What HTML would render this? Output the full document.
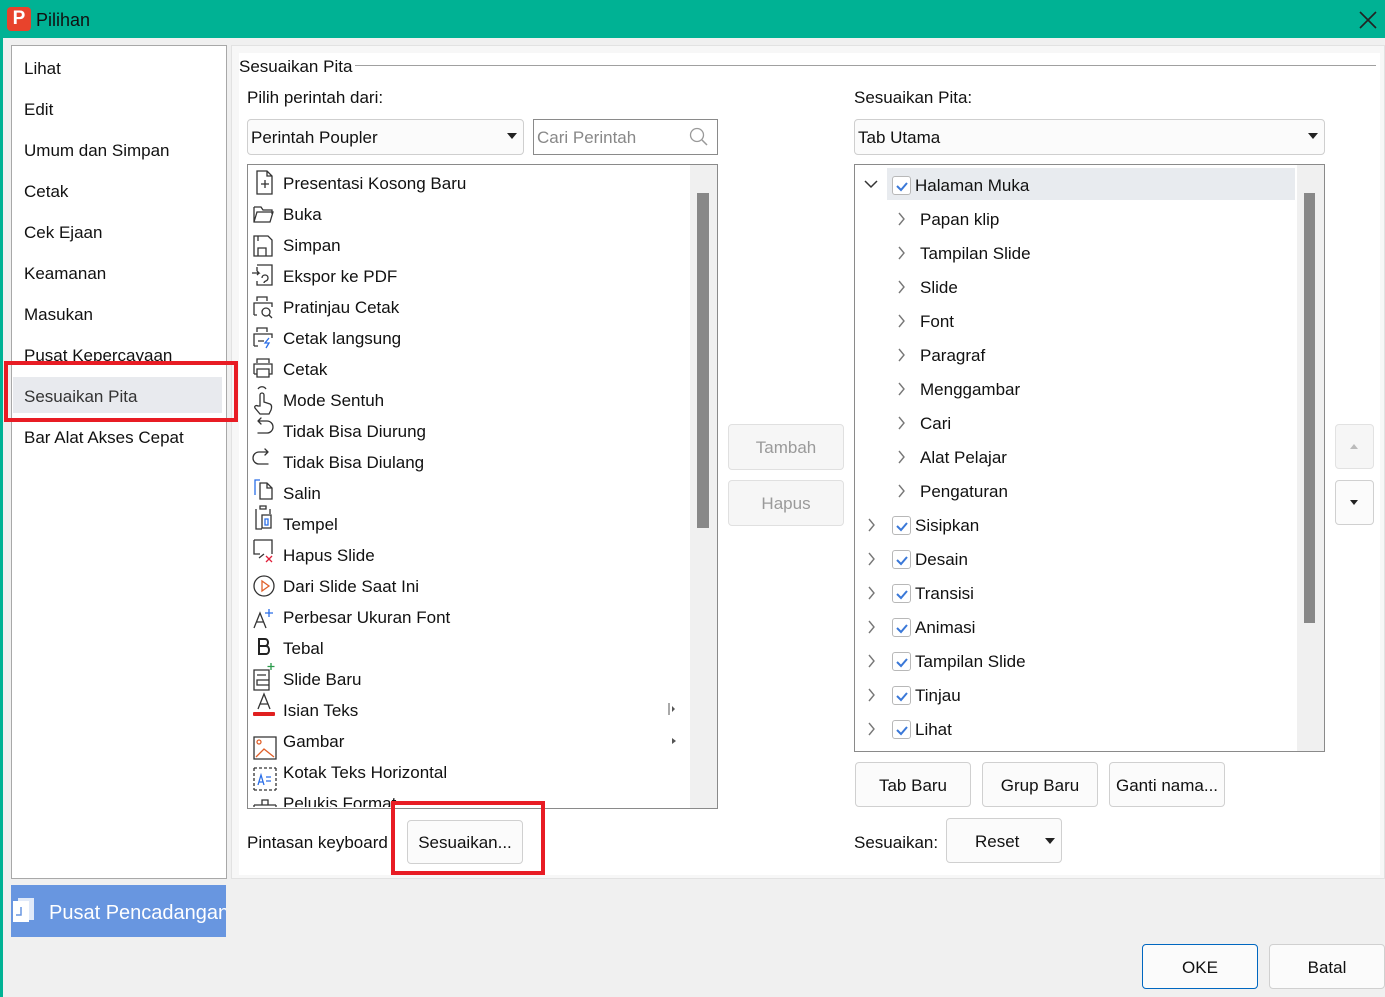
<!DOCTYPE html>
<html><head><meta charset="utf-8">
<style>
*{margin:0;padding:0;box-sizing:border-box}
body{width:1385px;height:997px;overflow:hidden;background:#f0f0f0;font-family:"Liberation Sans",sans-serif;font-size:17px;color:#111;position:relative}
.a{position:absolute}
.t{position:absolute;line-height:20px;white-space:nowrap;margin-top:1px}
.btn{position:absolute;background:#fbfbfb;border:1px solid #d0d0d0;border-radius:4px;text-align:center;font-size:17px;padding-top:1px}
.cb{position:absolute;width:19px;height:19px;border:1px solid #b8b8b8;border-radius:3px;background:#fff}
</style></head><body>
<div class="a" style="left:0;top:0;width:1385px;height:38px;background:#00b294"></div>
<div class="a" style="left:0;top:38px;width:3px;height:959px;background:#00b294"></div>
<div class="a" style="left:7px;top:7px;width:24px;height:24px;background:#e8432c;border-radius:4px;color:#fff;font-weight:bold;font-size:19px;text-align:center;line-height:23px">P</div>
<div class="t" style="left:36px;top:9px;font-size:18px;color:#111">Pilihan</div>
<svg class="a" style="left:1359px;top:11px" width="18" height="18"><path d="M1 1L17 17M17 1L1 17" stroke="#222" stroke-width="1.6"/></svg>

<div class="a" style="left:11px;top:45px;width:216px;height:834px;background:#fff;border:1px solid #a8a8a8"></div>
<div class="a" style="left:13px;top:377px;width:209px;height:36px;background:#e8eaee"></div>
<div class="t" style="left:24px;top:58px">Lihat</div>
<div class="t" style="left:24px;top:99px">Edit</div>
<div class="t" style="left:24px;top:140px">Umum dan Simpan</div>
<div class="t" style="left:24px;top:181px">Cetak</div>
<div class="t" style="left:24px;top:222px">Cek Ejaan</div>
<div class="t" style="left:24px;top:263px">Keamanan</div>
<div class="t" style="left:24px;top:304px">Masukan</div>
<div class="t" style="left:24px;top:345px">Pusat Kepercayaan</div>
<div class="t" style="left:24px;top:386px;color:#333">Sesuaikan Pita</div>
<div class="t" style="left:24px;top:427px">Bar Alat Akses Cepat</div>

<div class="a" style="left:11px;top:885px;width:215px;height:52px;background:#6896e0"></div>
<svg class="a" style="left:12px;top:897px" width="24" height="26"><rect x="6" y="1" width="16" height="22" fill="#fff" opacity=".8"/><rect x="1" y="4" width="16" height="21" fill="#fff"/><path d="M9 10v8h-5" stroke="#6896e0" stroke-width="1.5" fill="none"/></svg>
<div class="t" style="left:49px;top:902px;font-size:20px;color:#fff;width:177px;overflow:hidden">Pusat Pencadangan</div>

<div class="a" style="left:231px;top:45px;width:1154px;height:834px;background:#f7f7f7;border:1px solid #e2e2e2"></div>
<div class="a" style="left:239px;top:53px;width:1141px;height:822px;background:#fff"></div>
<div class="a" style="left:4px;top:361px;width:234px;height:61px;border:4px solid #e81c24;z-index:5"></div>
<div class="t" style="left:239px;top:56px">Sesuaikan Pita</div>
<div class="a" style="left:355px;top:65px;width:1021px;height:1px;background:#a0a0a0"></div>
<div class="t" style="left:247px;top:87px">Pilih perintah dari:</div>
<div class="a" style="left:247px;top:119px;width:277px;height:36px;border:1px solid #cfcfcf;border-radius:4px;background:#fbfbfb"></div>
<div class="t" style="left:251px;top:127px">Perintah Poupler</div>
<svg class="a" style="left:507px;top:133px" width="10" height="6"><path d="M0 0h10L5 6z" fill="#222"/></svg>
<div class="a" style="left:533px;top:119px;width:185px;height:36px;border:1px solid #8a8a8a;background:#fff"></div>
<div class="t" style="left:537px;top:127px;color:#888">Cari Perintah</div>
<svg class="a" style="left:689px;top:127px" width="20" height="20"><circle cx="8" cy="8" r="6.5" stroke="#999" fill="none" stroke-width="1.3"/><path d="M13 13l5 5" stroke="#999" stroke-width="1.5"/></svg>

<div class="a" style="left:247px;top:164px;width:471px;height:645px;border:1px solid #8a8a8a;background:#fff;overflow:hidden">
 <div class="a" style="left:442px;top:0;width:27px;height:645px;background:#f0f0f0"></div>
 <div class="a" style="left:449px;top:28px;width:12px;height:335px;background:#888"></div>
 <svg class="a" style="left:420px;top:538px" width="8" height="12"><path d="M1 0v12" stroke="#555"/><path d="M4 3l3 3-3 3z" fill="#555"/></svg>
 <svg class="a" style="left:424px;top:572px" width="6" height="8"><path d="M0 1l4 3-4 3z" fill="#555"/></svg>
</div>
<div class="a" style="left:248px;top:165px;width:440px;height:642px;overflow:hidden">
<svg width="440" height="660" style="position:absolute;left:0;top:0" fill="none" stroke="#333" stroke-width="1.3">
 <path d="M9 7h10l5 5v18H9z M19 7v5h5 M13 20h8 M17 16v8" transform="translate(0,-1)"/>
 <path d="M6 42h7l2 3h9v4 M6 42v15h16l3-10H9l-3 10"/>
 <path d="M6 71h14l4 4v16H6z M10 91v-8h8v8 M10 71v5"/>
 <path d="M9 100h15v20H9v-4 M9 106v-4 M4 108h7l-2-2m2 2l-2 2 M14 113c0-4 6-4 6 0s-4 2-4 5"/>
 <path d="M9 136v-4h10v4 M6 150v-12h18v4 M6 150h3" /><circle cx="18" cy="147" r="4"/><path d="M21 150l3 3"/>
 <path d="M9 167v-4h10v4 M6 181v-12h18v4 M6 181h4 M10 176h6"/><path d="M21 173l-4 5h4l-3 5" stroke="#2a6ee8"/>
 <path d="M9 198v-4h12v4 M6 209v-10h18v10h-3 M9 209h-3 M9 204h12v8H9z"/>
 <path d="M12 241v-11a2 2 0 014 0v7l6 2c2 1 2 3 1 6l-2 4H12l-5-6c-1-2 1-3 3-2z M10 224c2-3 6-3 8 0"/>
 <path d="M10 256h9a6 6 0 010 12h-9 M10 256l3-3 M10 256l3 3" stroke-linecap="round"/>
 <path d="M20 288h-9a6 6 0 000 12h9 M20 288l-3-3 M20 288l-3 3" stroke-linecap="round" transform="translate(0,-1)"/>
 <path d="M7 330v-15h5" stroke="#2a6ee8"/><path d="M12 334v-16h7l5 5v11z M19 318v5h5"/>
 <path d="M8 344v20h6 M22 344v5 M12 344h6v-3h-6z M14 350h9v13h-9z" /><path d="M17 354h3v6h-3z" stroke="#2a6ee8"/>
 <path d="M6 375h18v14 M6 375v14h6 M11 393l5-4" /><path d="M18 391l6 6M24 391l-6 6" stroke="#e0203a"/>
 <circle cx="16" cy="421" r="10"/><path d="M14 416v10l7-5z" stroke="#e0602a"/>
 <path d="M6 463l6-15 6 15 M8 457h8"/><path d="M21 444v8M17 448h8" stroke="#2a6ee8"/>
 <path d="M11 474h6c4 0 4 7 0 7h-6zm0 7h7c4 0 4 8 0 8h-7z" stroke="#222" stroke-width="2"/>
 <path d="M6 505h15v20H6z M9 510h9 M9 515h12v5H9z"/><path d="M23 498v7M19.5 501.5h7" stroke="#2a9a4a"/>
 <path d="M10 544l6-15 6 15 M12 539h8"/><rect x="5" y="547" width="22" height="4" fill="#e02020" stroke="none" rx="1"/>
 <path d="M6 572h22v22H6z"/><circle cx="11" cy="577" r="2" stroke="#e0602a"/><path d="M8 592l8-8 10 8" stroke="#e0602a"/>
 <path d="M6 603v22 M28 603v22 M6 603h22 M6 625h22" stroke-dasharray="3 2"/><path d="M10 620l3-10 3 10 M11 617h4 M18 612h5 M18 616h5" stroke="#2a6ee8"/>
 <path d="M6 640h22 M6 640v4 M28 640v4 M14 640v-5h6v5"/><path d="M6 644h22" stroke="#e0602a"/>
</svg>
<div class="t" style="left:35px;top:8px">Presentasi Kosong Baru</div>
<div class="t" style="left:35px;top:39px">Buka</div>
<div class="t" style="left:35px;top:70px">Simpan</div>
<div class="t" style="left:35px;top:101px">Ekspor ke PDF</div>
<div class="t" style="left:35px;top:132px">Pratinjau Cetak</div>
<div class="t" style="left:35px;top:163px">Cetak langsung</div>
<div class="t" style="left:35px;top:194px">Cetak</div>
<div class="t" style="left:35px;top:225px">Mode Sentuh</div>
<div class="t" style="left:35px;top:256px">Tidak Bisa Diurung</div>
<div class="t" style="left:35px;top:287px">Tidak Bisa Diulang</div>
<div class="t" style="left:35px;top:318px">Salin</div>
<div class="t" style="left:35px;top:349px">Tempel</div>
<div class="t" style="left:35px;top:380px">Hapus Slide</div>
<div class="t" style="left:35px;top:411px">Dari Slide Saat Ini</div>
<div class="t" style="left:35px;top:442px">Perbesar Ukuran Font</div>
<div class="t" style="left:35px;top:473px">Tebal</div>
<div class="t" style="left:35px;top:504px">Slide Baru</div>
<div class="t" style="left:35px;top:535px">Isian Teks</div>
<div class="t" style="left:35px;top:566px">Gambar</div>
<div class="t" style="left:35px;top:597px">Kotak Teks Horizontal</div>
<div class="t" style="left:35px;top:628px">Pelukis  Format</div>
</div>

<div class="btn" style="left:728px;top:424px;width:116px;height:46px;line-height:44px;color:#9a9a9a;background:#f6f6f6;border-color:#e0e0e0">Tambah</div>
<div class="btn" style="left:728px;top:480px;width:116px;height:46px;line-height:44px;color:#9a9a9a;background:#f6f6f6;border-color:#e0e0e0">Hapus</div>

<div class="t" style="left:854px;top:87px">Sesuaikan Pita:</div>
<div class="a" style="left:854px;top:119px;width:471px;height:36px;border:1px solid #cfcfcf;border-radius:4px;background:#fbfbfb"></div>
<div class="t" style="left:858px;top:127px">Tab Utama</div>
<svg class="a" style="left:1308px;top:133px" width="10" height="6"><path d="M0 0h10L5 6z" fill="#222"/></svg>

<div class="a" style="left:854px;top:164px;width:471px;height:588px;border:1px solid #8a8a8a;background:#fff;overflow:hidden">
 <div class="a" style="left:442px;top:0;width:27px;height:588px;background:#f0f0f0"></div>
 <div class="a" style="left:449px;top:28px;width:11px;height:430px;background:#888"></div>
 <div class="a" style="left:32px;top:3px;width:408px;height:32px;background:#e8ebef"></div>
</div>
<svg class="a" style="left:864px;top:180px" width="14" height="9"><path d="M1 1l6 6 6-6" stroke="#333" stroke-width="1.5" fill="none"/></svg>
<div class="cb" style="left:892px;top:176px"></div>
<div class="t" style="left:915px;top:175px">Halaman Muka</div>
<svg class="a" style="left:896px;top:201px" width="12" height="310" fill="none" stroke="#777" stroke-width="1.4">
 <path d="M3 12l5 6-5 6"/><path d="M3 46l5 6-5 6"/><path d="M3 80l5 6-5 6"/><path d="M3 114l5 6-5 6"/><path d="M3 148l5 6-5 6"/><path d="M3 182l5 6-5 6"/><path d="M3 216l5 6-5 6"/><path d="M3 250l5 6-5 6"/><path d="M3 284l5 6-5 6"/>
</svg>
<div class="t" style="left:920px;top:209px">Papan klip</div>
<div class="t" style="left:920px;top:243px">Tampilan Slide</div>
<div class="t" style="left:920px;top:277px">Slide</div>
<div class="t" style="left:920px;top:311px">Font</div>
<div class="t" style="left:920px;top:345px">Paragraf</div>
<div class="t" style="left:920px;top:379px">Menggambar</div>
<div class="t" style="left:920px;top:413px">Cari</div>
<div class="t" style="left:920px;top:447px">Alat Pelajar</div>
<div class="t" style="left:920px;top:481px">Pengaturan</div>
<svg class="a" style="left:866px;top:507px" width="12" height="240" fill="none" stroke="#777" stroke-width="1.4">
 <path d="M3 12l5 6-5 6"/><path d="M3 46l5 6-5 6"/><path d="M3 80l5 6-5 6"/><path d="M3 114l5 6-5 6"/><path d="M3 148l5 6-5 6"/><path d="M3 182l5 6-5 6"/><path d="M3 216l5 6-5 6"/>
</svg>
<div class="cb" style="left:892px;top:516px"></div><div class="t" style="left:915px;top:515px">Sisipkan</div>
<div class="cb" style="left:892px;top:550px"></div><div class="t" style="left:915px;top:549px">Desain</div>
<div class="cb" style="left:892px;top:584px"></div><div class="t" style="left:915px;top:583px">Transisi</div>
<div class="cb" style="left:892px;top:618px"></div><div class="t" style="left:915px;top:617px">Animasi</div>
<div class="cb" style="left:892px;top:652px"></div><div class="t" style="left:915px;top:651px">Tampilan Slide</div>
<div class="cb" style="left:892px;top:686px"></div><div class="t" style="left:915px;top:685px">Tinjau</div>
<div class="cb" style="left:892px;top:720px"></div><div class="t" style="left:915px;top:719px">Lihat</div>
<svg class="a" style="left:892px;top:176px" width="20" height="570" fill="none" stroke="#3a78d8" stroke-width="2">
 <path d="M5 10l4 4 6-7"/><path d="M5 350l4 4 6-7"/><path d="M5 384l4 4 6-7"/><path d="M5 418l4 4 6-7"/><path d="M5 452l4 4 6-7"/><path d="M5 486l4 4 6-7"/><path d="M5 520l4 4 6-7"/><path d="M5 554l4 4 6-7"/>
</svg>

<div class="btn" style="left:1335px;top:424px;width:39px;height:45px;background:#f6f6f6;border-color:#e2e2e2"></div>
<svg class="a" style="left:1350px;top:444px" width="8" height="5"><path d="M0 5h8L4 0z" fill="#bbb"/></svg>
<div class="btn" style="left:1335px;top:480px;width:39px;height:45px"></div>
<svg class="a" style="left:1350px;top:500px" width="8" height="5"><path d="M0 0h8L4 5z" fill="#222"/></svg>

<div class="btn" style="left:855px;top:762px;width:116px;height:45px;line-height:43px">Tab Baru</div>
<div class="btn" style="left:982px;top:762px;width:116px;height:45px;line-height:43px">Grup Baru</div>
<div class="btn" style="left:1109px;top:762px;width:116px;height:45px;line-height:43px">Ganti nama...</div>
<div class="t" style="left:854px;top:832px">Sesuaikan:</div>
<div class="btn" style="left:946px;top:818px;width:116px;height:45px;line-height:43px;text-align:left;padding-left:28px">Reset</div>
<svg class="a" style="left:1045px;top:838px" width="10" height="6"><path d="M0 0h10L5 6z" fill="#222"/></svg>

<div class="t" style="left:247px;top:832px">Pintasan keyboard</div>
<div class="btn" style="left:407px;top:820px;width:116px;height:44px;line-height:42px">Sesuaikan...</div>
<div class="a" style="left:391px;top:801px;width:154px;height:74px;border:4px solid #e81c24;z-index:5"></div>

<div class="btn" style="left:1142px;top:944px;width:116px;height:45px;line-height:43px;border-color:#0067c0">OKE</div>
<div class="btn" style="left:1269px;top:944px;width:116px;height:45px;line-height:43px">Batal</div>
</body></html>
